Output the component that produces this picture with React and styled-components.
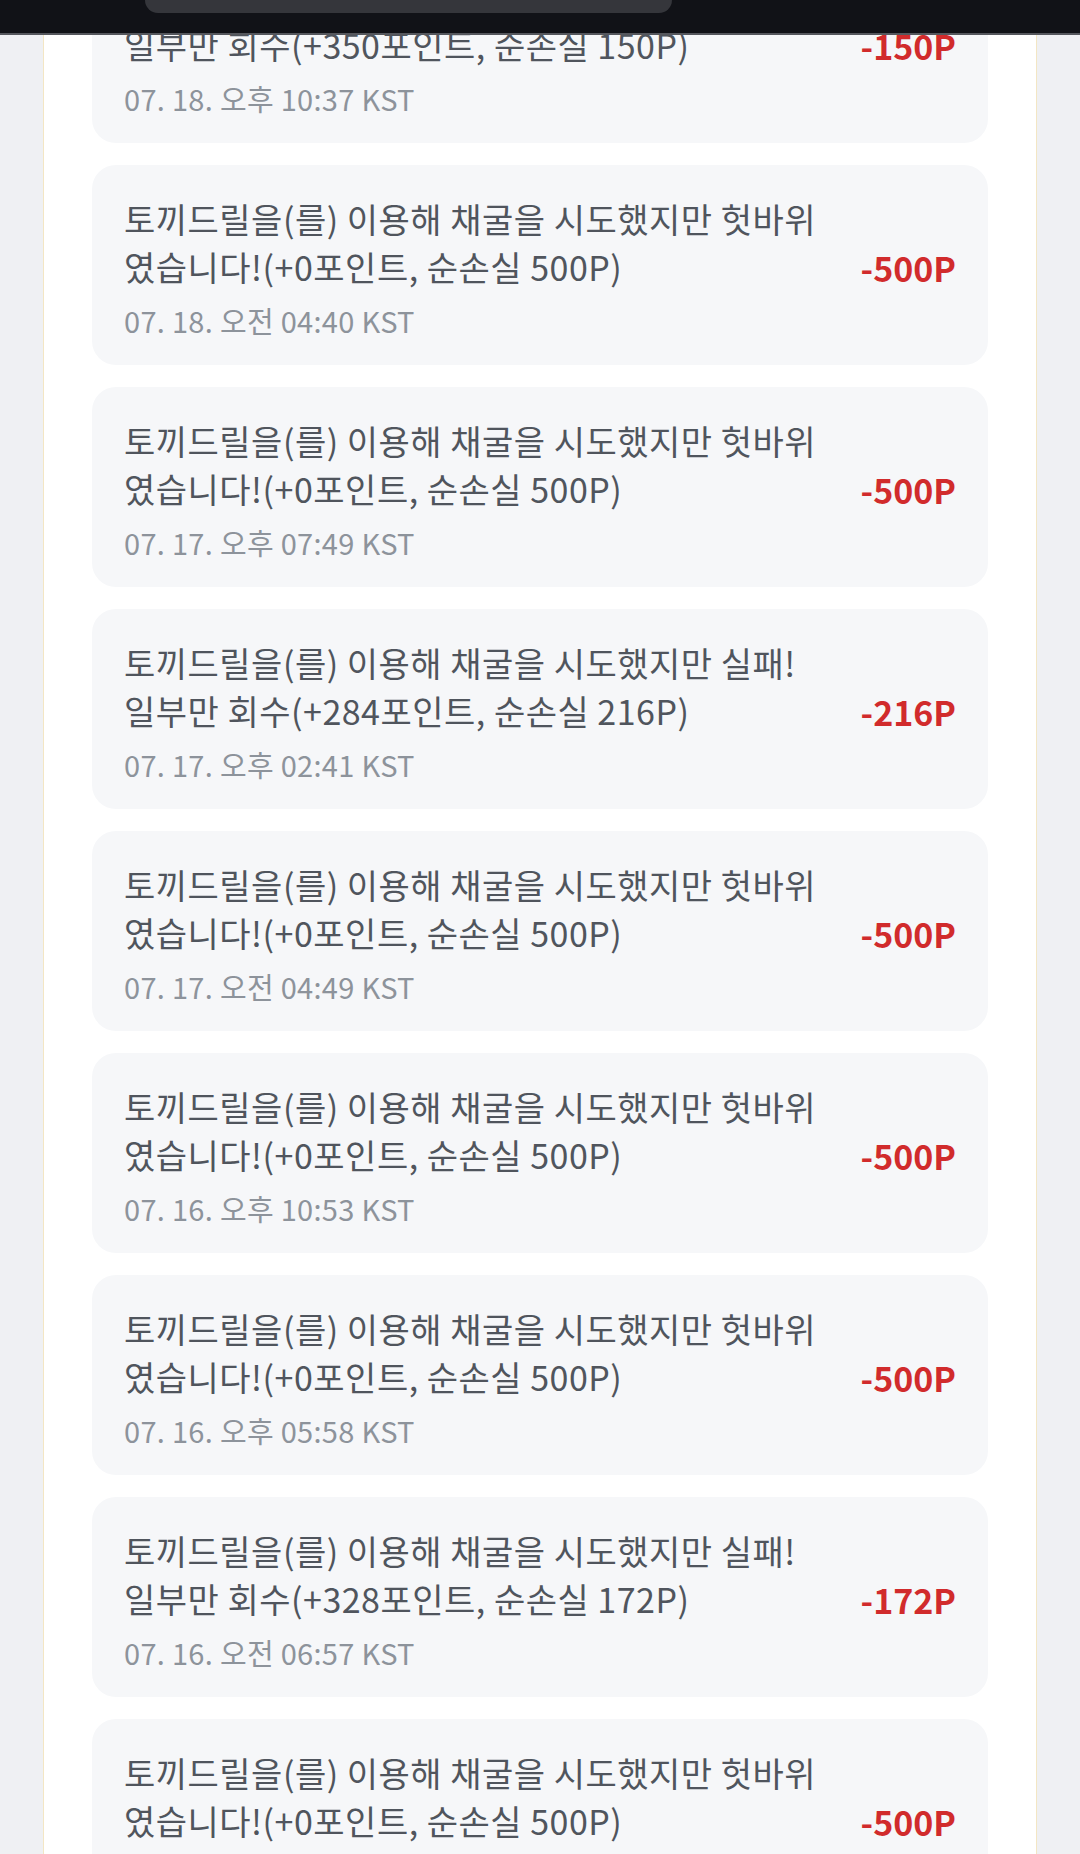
import React from 'react';
import styled, { createGlobalStyle } from 'styled-components';

const GlobalStyle = createGlobalStyle`
  html, body {
    margin: 0;
    padding: 0;
    background: #eff0f3;
  }
  body {
    font-family: "Noto Sans CJK KR", "Noto Sans", sans-serif;
    -webkit-font-smoothing: antialiased;
  }
`;

const history = [
  { fail: true, gain: 350, loss: 150, date: '07. 18. 오후 10:37 KST' },
  { fail: false, gain: 0, loss: 500, date: '07. 18. 오전 04:40 KST' },
  { fail: false, gain: 0, loss: 500, date: '07. 17. 오후 07:49 KST' },
  { fail: true, gain: 284, loss: 216, date: '07. 17. 오후 02:41 KST' },
  { fail: false, gain: 0, loss: 500, date: '07. 17. 오전 04:49 KST' },
  { fail: false, gain: 0, loss: 500, date: '07. 16. 오후 10:53 KST' },
  { fail: false, gain: 0, loss: 500, date: '07. 16. 오후 05:58 KST' },
  { fail: true, gain: 328, loss: 172, date: '07. 16. 오전 06:57 KST' },
  { fail: false, gain: 0, loss: 500, date: '07. 16. 오전 01:12 KST' },
  { fail: false, gain: 0, loss: 500, date: '07. 15. 오후 09:30 KST' },
];

const message = (item) => {
  const tail = `(+${item.gain}포인트, 순손실 ${item.loss}P)`;
  if (item.fail) {
    return `토끼드릴을(를) 이용해 채굴을 시도했지만 실패! 일부만 회수${tail}`;
  }
  return `토끼드릴을(를) 이용해 채굴을 시도했지만 헛바위였습니다!${tail}`;
};

const App = () => {
  return (
    <>
      <GlobalStyle />
      <StatusBar>
        <Notch />
      </StatusBar>
      <Page>
        <Panel>
          <List>
            {history.map((item, index) => (
              <Row key={index}>
                <Info>
                  <Message>{message(item)}</Message>
                  <DateText>{item.date}</DateText>
                </Info>
                <Amount>-{item.loss}P</Amount>
              </Row>
            ))}
          </List>
        </Panel>
      </Page>
    </>
  );
};

export default App;

const StatusBar = styled.div`
  position: fixed;
  top: 0;
  left: 0;
  right: 0;
  height: 33px;
  background: #111217;
  border-bottom: 2px solid #55575d;
  z-index: 10;
`;

const Notch = styled.div`
  margin-left: 145px;
  width: 527px;
  height: 13px;
  background: #35363b;
  border-radius: 0 0 22px 22px;
`;

const Page = styled.div`
  height: 1854px;
  overflow: hidden;
  padding: 0 43px;
  box-sizing: border-box;
  background: #eff0f3;
`;

const Panel = styled.div`
  height: 100%;
  display: flex;
  flex-direction: column;
  background: #ffffff;
  border-left: 1px solid #f3e6c4;
  border-right: 1px solid #f3e6c4;
  padding: 0 48px;
  box-sizing: border-box;
`;

const List = styled.div`
  display: flex;
  flex-direction: column;
  gap: 22px;
  margin-top: -57px;
`;

const Row = styled.div`
  display: flex;
  align-items: center;
  gap: 44px;
  height: 200px;
  flex-shrink: 0;
  box-sizing: border-box;
  padding: 30px 32px 25px;
  background: #f6f7f9;
  border-radius: 24px;
`;

const Info = styled.div`
  flex: 1;
  min-width: 0;
  display: flex;
  flex-direction: column;
`;

const Message = styled.div`
  font-size: 34px;
  letter-spacing: 0.5px;
  line-height: 48px;
  color: #50555d;
`;

const DateText = styled.div`
  margin-top: 9px;
  font-size: 29px;
  letter-spacing: 0.3px;
  line-height: 40px;
  color: #8d939b;
`;

const Amount = styled.div`
  flex-shrink: 0;
  font-size: 34px;
  font-weight: 700;
  color: #d12b2c;
`;
